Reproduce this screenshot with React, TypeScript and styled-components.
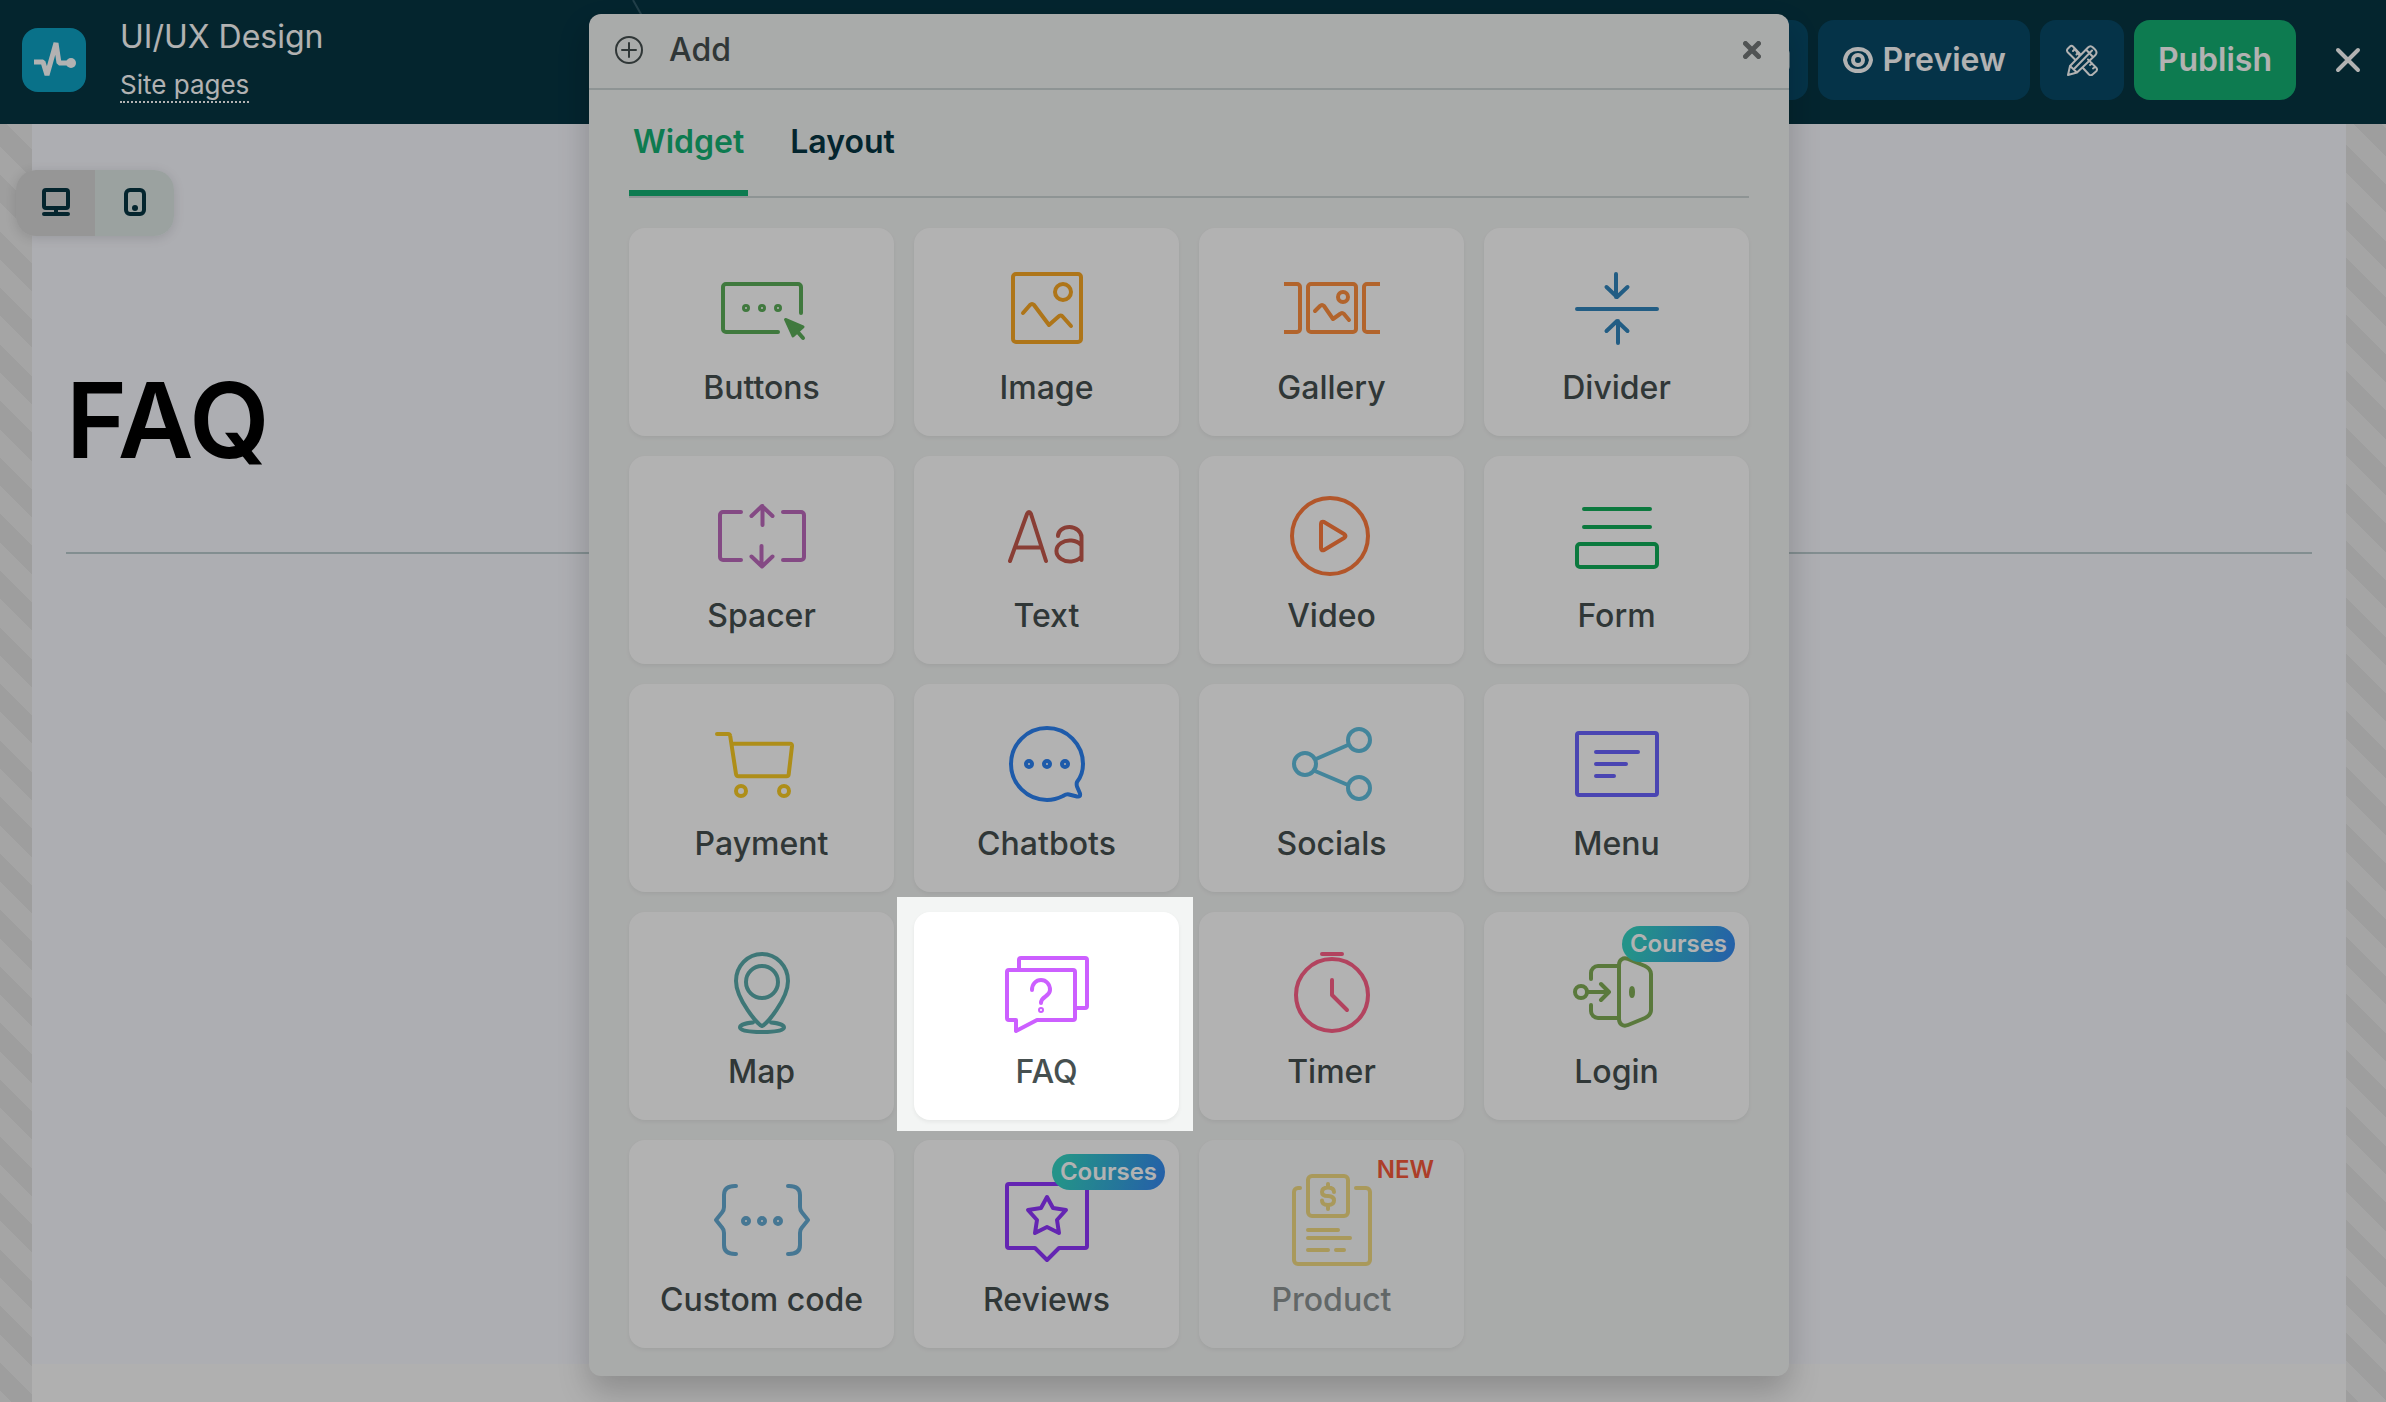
import React from "react";
import styled, { createGlobalStyle, css } from "styled-components";

const GlobalStyle = createGlobalStyle`
  *, *::before, *::after { box-sizing: border-box; }
  body { margin: 0; font-family: Inter, Roboto, sans-serif; background: #fafafa; }
  button { font: inherit; color: inherit; border: 0; padding: 0; background: none; cursor: pointer; }
`;

const Page = styled.div`
  position: relative;
  display: flex;
  flex-direction: column;
  min-height: 100vh;
  overflow: hidden;
`;

/* ---------- top bar ---------- */

const TopBar = styled.header`
  display: flex;
  align-items: center;
  height: 124px;
  padding: 0 18px 0 22px;
  background: #063543;
  color: #fff;
`;

const Logo = styled.a`
  display: block;
  width: 64px;
  height: 64px;
  margin-bottom: 4px;
  border-radius: 16px;
  background: #0ea3c5;
`;

const Titles = styled.div`
  display: flex;
  flex-direction: column;
  align-items: flex-start;
  gap: 12px;
  margin: 0 0 4px 34px;
  width: 512px;
`;

const SiteName = styled.span`
  font-size: 32px;
  line-height: 40px;
`;

const PagesLink = styled.a`
  color: inherit;
  font-size: 26px;
  line-height: 32px;
  text-decoration: none;
  border-bottom: 2px dotted #fff;
`;

const Chevron = styled.svg`
  display: block;
  width: 40px;
  height: 124px;
`;

const Actions = styled.div`
  display: flex;
  align-items: center;
  gap: 10px;
  margin: 0 0 4px auto;
`;

const ActionButton = styled.button<{ $primary?: boolean }>`
  display: flex;
  align-items: center;
  justify-content: center;
  gap: 8px;
  height: 80px;
  padding: 0 24px;
  border-radius: 16px;
  background: ${(p) => (p.$primary ? "#13b173" : "#084a68")};
  font-size: 32px;
  line-height: 40px;
  font-weight: 600;
`;

const HiddenButton = styled(ActionButton)`
  padding: 0 18px;
`;

const IconButton = styled(ActionButton)`
  width: 84px;
`;

const ExitButton = styled.button`
  display: flex;
  margin-left: 22px;
  padding: 4px;
`;

/* ---------- workspace ---------- */

const Workspace = styled.main`
  flex: 1;
  display: flex;
  flex-direction: column;
  padding: 0 40px 0 32px;
  background: repeating-linear-gradient(
    45deg,
    #ececec 0 8px,
    #e2e2e2 8px 28px,
    #ececec 28px 40px
  );
`;

const Canvas = styled.section`
  flex: 1;
  padding: 46px 34px 0;
  background: #f8f9ff;
`;

const NextSection = styled.div`
  height: 38px;
  background: #fcfcfc;
`;

const DeviceSwitch = styled.div`
  display: flex;
  width: 158px;
  margin-left: -50px;
  border-radius: 20px;
  overflow: hidden;
  box-shadow: 0 2px 12px rgba(0, 0, 0, 0.12);
`;

const DeviceButton = styled.button<{ $active?: boolean }>`
  display: flex;
  flex: 1;
  align-items: center;
  justify-content: center;
  height: 66px;
  padding-bottom: 2px;
  color: #063543;
  background: ${(p) => (p.$active ? "#d7d7d7" : "#dee8e6")};
`;

const Heading = styled.h1`
  margin: 120px 0 0;
  padding-bottom: 68px;
  border-bottom: 2px solid #bbcccf;
  color: #000;
  font-size: 104px;
  line-height: 128px;
  font-weight: 600;
`;

/* ---------- dialog ---------- */

const DialogLayer = styled.div`
  position: absolute;
  inset: 0;
  display: flex;
  align-items: flex-start;
  justify-content: center;
  padding: 14px 8px 0 0;
`;

const Dialog = styled.section`
  width: 1200px;
  max-width: 100%;
  border-radius: 12px;
  background: #f3f5f4;
  color: #465050;
  box-shadow: 0 16px 32px rgba(0, 0, 0, 0.2);
`;

const DialogHeader = styled.header`
  display: flex;
  align-items: center;
  gap: 26px;
  padding: 16px 24px 18px 26px;
  border-bottom: 2px solid #ccd5d4;
`;

const DialogTitle = styled.h2`
  flex: 1;
  margin: 0;
  font-size: 32px;
  line-height: 40px;
  font-weight: 500;
`;

const CloseButton = styled.button`
  display: flex;
  padding: 4px;
  color: #747979;
`;

const DialogBody = styled.div`
  padding: 0 40px 28px;
`;

const Tabs = styled.div`
  display: flex;
  gap: 38px;
  margin-bottom: 30px;
  border-bottom: 2px solid #ccd5d4;
`;

const Tab = styled.button<{ $active?: boolean }>`
  padding: 32px 4px 28px;
  border-bottom: 6px solid ${(p) => (p.$active ? "#13b173" : "transparent")};
  color: ${(p) => (p.$active ? "#13b173" : "#063543")};
  font-size: 32px;
  line-height: 40px;
  font-weight: 600;
`;

const Grid = styled.div`
  display: grid;
  grid-template-columns: repeat(4, 1fr);
  gap: 20px;
`;

const fadedStyle = css`
  background: rgba(255, 255, 255, 0.6);
  & > svg, & > span:last-child { opacity: 0.6; }
`;

/* The oversized shadow dims everything outside the highlighted card. */
const spotlightStyle = css`
  &::after {
    content: "";
    position: absolute;
    inset: -15px -14px -11px -17px;
    z-index: 10;
    box-shadow: 0 0 0 3000px rgba(0, 0, 0, 0.3);
    pointer-events: none;
  }
`;

const Card = styled.button<{ $faded?: boolean; $spotlight?: boolean }>`
  position: relative;
  display: flex;
  flex-direction: column;
  align-items: center;
  gap: 11px;
  padding: 30px 0 28px;
  border-radius: 16px;
  background: #fff;
  box-shadow: 0 2px 4px rgba(0, 0, 0, 0.06);
  ${(p) => p.$faded && fadedStyle}
  ${(p) => p.$spotlight && spotlightStyle}
`;

const CardLabel = styled.span`
  font-size: 32px;
  line-height: 40px;
  font-weight: 500;
`;

const CoursesBadge = styled.span`
  position: absolute;
  top: 14px;
  right: 14px;
  padding: 0 8px;
  border-radius: 18px;
  background: linear-gradient(105deg, #34d3c4 10%, #358cf0 95%);
  color: #fff;
  font-size: 24px;
  line-height: 36px;
  font-weight: 600;
`;

const NewBadge = styled.span`
  position: absolute;
  top: 12px;
  right: 30px;
  color: #f7593c;
  font-size: 24px;
  line-height: 36px;
  font-weight: 600;
`;

const WidgetSvg = styled.svg`
  display: block;
  width: 99px;
  height: 99px;
  fill: none;
`;

/* ---------- widget data ---------- */

type Widget = {
  name: string;
  color: string;
  art: React.ReactNode;
  badge?: "courses" | "new";
  faded?: boolean;
  spotlight?: boolean;
};

const Dots = ({ xs, y, r, w }: { xs: number[]; y: number; r: number; w: number }) => (
  <>
    {xs.map((x) => (
      <circle key={x} cx={x} cy={y} r={r} strokeWidth={w} />
    ))}
  </>
);

const widgets: Widget[] = [
  {
    name: "Buttons",
    color: "#5cae5a",
    art: (
      <>
        <path d="M89 55V29a3 3 0 0 0-3-3H14a3 3 0 0 0-3 3v42a3 3 0 0 0 3 3h52" />
        <Dots xs={[34, 50, 66]} y={50} r={2.5} w={3} />
        <path d="M73.5 61.5 91 69 86.500 73 81 78z" fill="#5cae5a" strokeWidth="3" />
        <path d="M84 72l7 8" />
      </>
    ),
  },
  {
    name: "Image",
    color: "#faa825",
    art: (
      <>
        <rect x="16" y="16" width="68" height="68" rx="3" />
        <circle cx="66" cy="34" r="8" />
        <path d="M26 55l7-8q2-2 4 0l15 20 9-8q3-3 5 0l8 9" />
      </>
    ),
  },
  {
    name: "Gallery",
    color: "#ff903f",
    art: (
      <>
        <path d="M2 26h13a3 3 0 0 1 3 3v42a3 3 0 0 1-3 3H2M98 26H85a3 3 0 0 0-3 3v42a3 3 0 0 0 3 3h13" strokeLinecap="butt" />
        <rect x="26" y="26" width="48" height="48" rx="3" />
        <circle cx="61" cy="39" r="5" />
        <path d="M33 53l5-5q2-2 4 0l9 13 7-5q2-2 4 0l5 6" />
      </>
    ),
  },
  {
    name: "Divider",
    color: "#3286bd",
    art: <path d="M10 51h80M49 16v23M39.5 29 50 39l10.5-10M51 85V63M39.5 73 50 63l10.5 10" />,
  },
  {
    name: "Spacer",
    color: "#be6abe",
    art: (
      <path d="M29 26H11a3 3 0 0 0-3 3v42a3 3 0 0 0 3 3h18M71 26h18a3 3 0 0 1 3 3v42a3 3 0 0 1-3 3H71M50.5 39V20M39.5 30 50 20l10.5 10M49.5 60v20M39.5 70.5 50 80.5l10.5-10" />
    ),
  },
  {
    name: "Text",
    color: "#c55a4c",
    art: (
      <path d="M13 75 30 28q2-4 4 0l15 47M18 61.5h26M61 50c0-5 5-9 11.500-9s12 5 12 10v23M84 59a13.500 10.500 0 1 0 0 12" />
    ),
  },
  {
    name: "Video",
    color: "#ff7c3d",
    art: (
      <>
        <circle cx="48" cy="50" r="38" />
        <path d="M39 38q0-3 3-2l20 12q3 2 0 4L42 64q-3 1-3-2z" />
      </>
    ),
  },
  {
    name: "Form",
    color: "#11ae5a",
    art: (
      <>
        <path d="M17 23h66M17 41h66" />
        <rect x="10" y="58" width="80" height="23" rx="3" />
      </>
    ),
  },
  {
    name: "Payment",
    color: "#facc25",
    art: (
      <>
        <path d="M5 20h11q2 0 2.200 2l5.800 38q.4 2.300 2.500 2.300H74.500q2 0 2.200-2L80 32q.2-2.300-2-2.300H21" />
        <circle cx="29" cy="77" r="5" />
        <circle cx="72" cy="77" r="5" />
      </>
    ),
  },
  {
    name: "Chatbots",
    color: "#2c83f4",
    art: (
      <>
        <path d="M80 68c4-5 6-11 6-18a36 36 0 1 0-36 36c6 0 11-1.500 16-4 2-1.200 4-2 6-1.500l8 2c2.500.5 3.500-.5 3-3l-3-7q-.7-2.500 0-4.500z" />
        <Dots xs={[32, 50, 68]} y={50} r={3} w={4} />
      </>
    ),
  },
  {
    name: "Socials",
    color: "#61bfdf",
    art: (
      <>
        <circle cx="23" cy="50" r="11" />
        <circle cx="77" cy="26" r="11" />
        <circle cx="77" cy="74" r="11" />
        <path d="M34 45l32-14M33 57l33 14" />
      </>
    ),
  },
  {
    name: "Menu",
    color: "#6b64ff",
    art: (
      <>
        <rect x="10" y="19" width="80" height="62" rx="2" />
        <path d="M29 38h42M29 50h30M29 62h18" />
      </>
    ),
  },
  {
    name: "Map",
    color: "#5aabab",
    art: (
      <>
        <path d="M50 84C46 83 24 57 24 39a26 27 0 0 1 52 0c0 18-22 44-26 45z" />
        <circle cx="50" cy="40" r="16" />
        <path d="M41 80.5c-8 .6-13 2.500-13 5 0 3 9 4.500 22 4.500s22-1.500 22-4.500c0-2.500-5-4.400-13-5" />
      </>
    ),
  },
  {
    name: "FAQ",
    color: "#cc5fff",
    spotlight: true,
    art: (
      <>
        <path d="M22 28V18a2 2 0 0 1 2-2h64a2 2 0 0 1 2 2v46a2 2 0 0 1-2 2H78" />
        <path d="M12 28h64a2 2 0 0 1 2 2v46a2 2 0 0 1-2 2H40L19 89V78h-7a2 2 0 0 1-2-2V30a2 2 0 0 1 2-2z" />
        <path d="M35 48c0-6 4-10 9-10s9 4 9 10c0 7-9 6-9 13" />
        <circle cx="44" cy="68" r="1" />
      </>
    ),
  },
  {
    name: "Timer",
    color: "#ff6088",
    art: (
      <>
        <circle cx="50" cy="53" r="36" />
        <path d="M40 12h20M50 38v15l15 15" />
      </>
    ),
  },
  {
    name: "Login",
    color: "#81ae56",
    badge: "courses",
    art: (
      <>
        <circle cx="14" cy="50" r="6" />
        <path d="M20 50h22M34 42l8 8-8 8M24 37v-6a7 7 0 0 1 7-7h21M24 63v6a7 7 0 0 0 7 7h21" />
        <path d="M52 23c0-5 4-8 9-6l17 7c4 2 6 4 6 8v36c0 4-2 6-6 8l-17 7c-5 2-9-1-9-6z" />
        <ellipse cx="65" cy="50" rx="1" ry="4" />
      </>
    ),
  },
  {
    name: "Custom code",
    color: "#65abd3",
    art: (
      <>
        <path d="M24 16h-1c-7 0-11 3-11 9v12c0 2-.5 4-2 5.500L4 50l6 7.500c1.500 1.500 2 3.500 2 5.500v12c0 6 4 9 11 9h1M76 16h1c7 0 11 3 11 9v12c0 2 .5 4 2 5.500l6 7.500-6 7.500c-1.500 1.500-2 3.500-2 5.500v12c0 6-4 9-11 9h-1" />
        <Dots xs={[34, 50, 66]} y={51} r={3} w={4} />
      </>
    ),
  },
  {
    name: "Reviews",
    color: "#9036ff",
    badge: "courses",
    art: (
      <>
        <path d="M12 14h76a2 2 0 0 1 2 2v60a2 2 0 0 1-2 2H62L50 90 38 78H12a2 2 0 0 1-2-2V16a2 2 0 0 1 2-2z" />
        <path d="M50 27l6 11 13 2-9 10 2 13-12-6-12 6 2-13-9-10 13-2z" />
      </>
    ),
  },
  {
    name: "Product",
    color: "#eec634",
    badge: "new",
    faded: true,
    art: (
      <>
        <path d="M18 18h-2a4 4 0 0 0-4 4v68a4 4 0 0 0 4 4h68a4 4 0 0 0 4-4V22a4 4 0 0 0-4-4H74" />
        <rect x="26" y="6" width="40" height="40" rx="4" />
        <path d="M26 60h30M26 68h42M26 80h20M54 80h8" />
        <path d="M52 22c0-3-2-4.500-6-4.500s-6 1.500-6 4.500 2 4 6 4 6 1.500 6 4.500-2 4.500-6 4.500-6-1.500-6-4.500M46 14v3M46 36v3" />
      </>
    ),
  },
];

const WidgetCard = ({ widget }: { widget: Widget }) => (
  <Card type="button" $faded={widget.faded} $spotlight={widget.spotlight}>
    <WidgetSvg
      viewBox="0 0 99 99"
      stroke={widget.color}
      strokeWidth="4"
      strokeLinecap="round"
      strokeLinejoin="round"
      aria-hidden="true"
    >
      {widget.art}
    </WidgetSvg>
    {widget.badge === "courses" && <CoursesBadge>Courses</CoursesBadge>}
    {widget.badge === "new" && <NewBadge>NEW</NewBadge>}
    <CardLabel>{widget.name}</CardLabel>
  </Card>
);

const line = { fill: "none", stroke: "currentColor", strokeLinecap: "round", strokeLinejoin: "round" } as const;

export default function App() {
  return (
    <Page>
      <GlobalStyle />
      <TopBar>
        <Logo href="#" aria-label="Home">
          <svg width="64" height="64" viewBox="0 0 64 64" aria-hidden="true">
            <path d="M12 34h9l4 13 9-32 3 20h11" fill="none" stroke="#fff" strokeWidth="5" strokeLinejoin="bevel" />
            <circle cx="49" cy="35" r="5" fill="#fff" />
          </svg>
        </Logo>
        <Titles>
          <SiteName>UI/UX Design</SiteName>
          <PagesLink href="#">Site pages</PagesLink>
        </Titles>
        <Chevron viewBox="0 0 40 124" aria-hidden="true">
          <path d="M1 0l35 62L1 124" fill="none" stroke="#315b69" strokeWidth="2" />
        </Chevron>
        <Actions>
          <HiddenButton type="button" aria-label="History">
            <svg width="34" height="32" viewBox="0 0 34 32" aria-hidden="true">
              <rect x="2" y="5" width="30" height="22" rx="4" {...line} strokeWidth="3" />
            </svg>
          </HiddenButton>
          <ActionButton type="button">
            <svg width="32" height="28" viewBox="0 0 32 28" aria-hidden="true">
              <path d="M3 14C4 7 9 3 16 3s12 4 13 11c-1 7-6 11-13 11S4 21 3 14z" {...line} strokeWidth="4" />
              <circle cx="16" cy="14" r="5" {...line} strokeWidth="4" />
            </svg>
            Preview
          </ActionButton>
          <IconButton type="button" aria-label="Design tools">
            <svg width="32" height="32" viewBox="0 0 32 32" aria-hidden="true">
              <g {...line} strokeWidth="2">
                <path d="M13 11 7 2.500Q5.500 1 4 2.500L1.500 5Q.5 6.500 1.500 8L9 15.500M17 24l6 6.500q2 1.500 3.500 0L30.500 27q1-1.500 0-3L22 15.500M7 2.500 14 10" />
                <path d="M9 5 7 7M12.500 8.500l-2 2M24 21l2-1.500M27 24.500l2-1.500" />
                <path d="M2 31l2-9L22 3.500q2.500-2.500 5 0l2.500 2.500q2 2.500 0 5L11 28.500zM4 22l7 6.500M8 25 26 6.500M20 5.500l7 7.500" />
              </g>
            </svg>
          </IconButton>
          <ActionButton type="button" $primary>
            Publish
          </ActionButton>
          <ExitButton type="button" aria-label="Exit editor">
            <svg width="32" height="32" viewBox="0 0 32 32" aria-hidden="true">
              <path d="M6 6l20 20M26 6 6 26" {...line} strokeWidth="4" />
            </svg>
          </ExitButton>
        </Actions>
      </TopBar>

      <Workspace>
        <Canvas>
          <DeviceSwitch>
            <DeviceButton type="button" $active aria-label="Desktop view">
              <svg width="30" height="30" viewBox="0 0 30 30" aria-hidden="true">
                <rect x="3" y="3" width="24" height="18" rx="2" {...line} strokeWidth="4" />
                <path d="M15 21v6M3 27h24" {...line} strokeWidth="4" />
              </svg>
            </DeviceButton>
            <DeviceButton type="button" aria-label="Mobile view">
              <svg width="30" height="30" viewBox="0 0 30 30" aria-hidden="true">
                <rect x="6" y="3" width="18" height="24" rx="4" {...line} strokeWidth="4" />
                <circle cx="15" cy="21" r="3" fill="currentColor" />
              </svg>
            </DeviceButton>
          </DeviceSwitch>
          <Heading>FAQ</Heading>
        </Canvas>
        <NextSection />
      </Workspace>

      <DialogLayer>
        <Dialog role="dialog" aria-labelledby="add-title">
          <DialogHeader>
            <svg width="28" height="28" viewBox="0 0 28 28" aria-hidden="true">
              <circle cx="14" cy="14" r="13" {...line} strokeWidth="2" />
              <path d="M14 7v14M7 14h14" {...line} strokeWidth="2" />
            </svg>
            <DialogTitle id="add-title">Add</DialogTitle>
            <CloseButton type="button" aria-label="Close">
              <svg width="18" height="18" viewBox="0 0 18 18" aria-hidden="true">
                <path d="M2.500 2.500l13 13M15.500 2.500l-13 13" {...line} strokeWidth="5" />
              </svg>
            </CloseButton>
          </DialogHeader>
          <DialogBody>
            <Tabs role="tablist">
              <Tab type="button" role="tab" aria-selected="true" $active>
                Widget
              </Tab>
              <Tab type="button" role="tab" aria-selected="false">
                Layout
              </Tab>
            </Tabs>
            <Grid>
              {widgets.map((w) => (
                <WidgetCard key={w.name} widget={w} />
              ))}
            </Grid>
          </DialogBody>
        </Dialog>
      </DialogLayer>
    </Page>
  );
}
